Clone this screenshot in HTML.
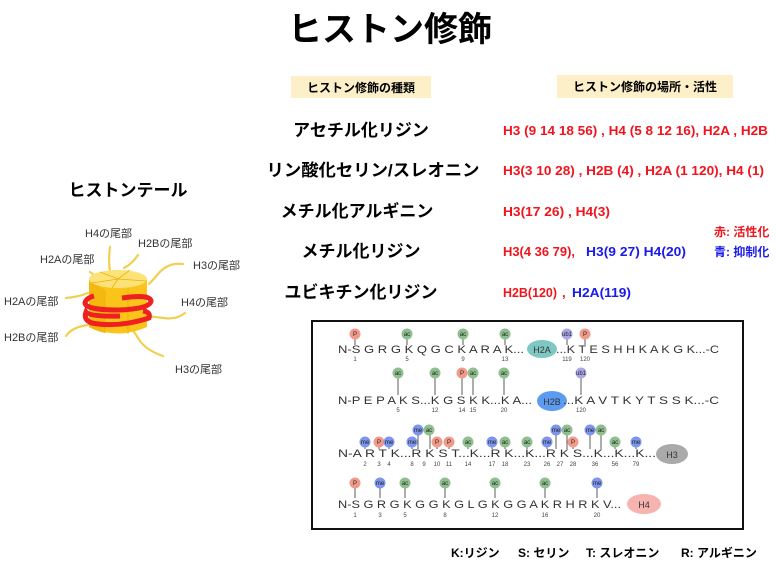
<!DOCTYPE html>
<html><head><meta charset="utf-8"><style>
html,body{margin:0;padding:0;background:#fff;width:777px;height:565px;overflow:hidden}
svg{display:block}
</style></head><body>
<svg width="777" height="565" viewBox="0 0 777 565" font-family="Liberation Sans, Noto Sans CJK JP, sans-serif">
<text x="390" y="41" font-size="34" font-weight="bold" text-anchor="middle" textLength="204" lengthAdjust="spacingAndGlyphs">ヒストン修飾</text>
<rect x="291" y="76" width="140" height="22" fill="#fdefc8"/>
<text x="361" y="92" font-size="12" font-weight="bold" text-anchor="middle">ヒストン修飾の種類</text>
<rect x="557" y="75" width="176" height="23" fill="#fdefc8"/>
<text x="645" y="91" font-size="12" font-weight="bold" text-anchor="middle">ヒストン修飾の場所・活性</text>
<g font-size="17" font-weight="bold" text-anchor="middle">
<text x="361" y="136">アセチル化リジン</text>
<text x="373" y="176" textLength="213" lengthAdjust="spacingAndGlyphs">リン酸化セリン/スレオニン</text>
<text x="357" y="217">メチル化アルギニン</text>
<text x="361" y="257">メチル化リジン</text>
<text x="361" y="298">ユビキチン化リジン</text>
</g>
<g font-size="13" font-weight="bold" fill="#f0141e">
<text x="503" y="135" textLength="265" lengthAdjust="spacingAndGlyphs">H3 (9 14 18 56) , H4 (5 8 12 16), H2A , H2B</text>
<text x="503" y="175" textLength="261" lengthAdjust="spacingAndGlyphs">H3(3 10 28) , H2B (4) , H2A (1 120), H4 (1)</text>
<text x="503" y="216" textLength="107" lengthAdjust="spacingAndGlyphs">H3(17 26) , H4(3)</text>
<text x="503" y="256" textLength="72" lengthAdjust="spacingAndGlyphs">H3(4 36 79),</text>
<text x="586" y="256" fill="#1a1aee" textLength="100" lengthAdjust="spacingAndGlyphs">H3(9 27) H4(20)</text>
<text x="503" y="297" textLength="54" lengthAdjust="spacingAndGlyphs">H2B(120)</text>
<text x="562" y="297">,</text>
<text x="572" y="297" fill="#1a1aee" textLength="59" lengthAdjust="spacingAndGlyphs">H2A(119)</text>
<text x="714" y="236" font-size="12">赤: 活性化</text>
<text x="714" y="256" font-size="12" fill="#1a1aee">青: 抑制化</text>
</g>
<text x="128" y="196" font-size="17" font-weight="bold" text-anchor="middle">ヒストンテール</text>
<g fill="none" stroke="#f0d050" stroke-width="2.2" stroke-linecap="round">
<path d="M110 247 Q107 268 114 288 Q119 300 116 306"/>
<path d="M138 255 Q132 264 124 268"/>
<path d="M90 272 Q96 276 98 280"/>
<path d="M183 264 Q168 262 158 274 Q153 280 149 284"/>
<path d="M66 298 Q78 297 88 293"/>
<path d="M185 313 Q176 320 164 318 Q154 317 149 316"/>
<path d="M66 336 Q72 327 88 325"/>
<path d="M163 356 Q145 350 138 338 Q133 330 128 323"/>
</g>
<path d="M89 280 L89 327 Q118 340 147 327 L147 280 Z" fill="#fbc41a"/>
<path d="M89 280 L89 327 Q96 331 105 333 L105 290 Z" fill="#f5b810"/>
<ellipse cx="118" cy="279" rx="29" ry="9" fill="#fde27a"/>
<g stroke="#e8b400" stroke-width="0.8" fill="none">
<path d="M118 279 L100 272 M118 279 L130 270 M118 279 L146 281 M118 279 L112 288 M118 279 L92 283"/>
<path d="M105 290 L105 333 M128 288 L128 334"/>
</g>
<path d="M122 298 Q150 294 151 301 Q150 309 118 310 Q86 310 85 303 Q86 298 94 296" fill="none" stroke="#ee2020" stroke-width="5"/>
<path d="M120 316 Q90 317 86 312 Q83 320 92 323 Q118 328 149 318 Q151 312 143 311" fill="none" stroke="#ee2020" stroke-width="5"/>
<g font-size="11" fill="#333">
<text x="85" y="237">H4の尾部</text>
<text x="138" y="247">H2Bの尾部</text>
<text x="40" y="263">H2Aの尾部</text>
<text x="193" y="269">H3の尾部</text>
<text x="4" y="305">H2Aの尾部</text>
<text x="181" y="306">H4の尾部</text>
<text x="4" y="341">H2Bの尾部</text>
<text x="175" y="373">H3の尾部</text>
</g>
<rect x="312" y="321" width="431" height="208" fill="#fff" stroke="#111" stroke-width="2"/>
<g font-size="11" fill="#333">
<text x="338" y="353" textLength="186" lengthAdjust="spacingAndGlyphs">N-S G R G K Q G C K A R A K...</text>
<ellipse cx="542" cy="349" rx="15" ry="9" fill="#7fc7c3"/>
<text x="542" y="353" font-size="9" text-anchor="middle">H2A</text>
<text x="556" y="353" textLength="163" lengthAdjust="spacingAndGlyphs">...K T E S H H K A K G K...-C</text>
<text x="338" y="404" textLength="194" lengthAdjust="spacingAndGlyphs">N-P E P A K S...K G S K K...K A...</text>
<ellipse cx="552" cy="401" rx="15" ry="10" fill="#5b9cf0"/>
<text x="552" y="405" font-size="9" text-anchor="middle">H2B</text>
<text x="563" y="404" textLength="156" lengthAdjust="spacingAndGlyphs">...K A V T K Y T S S K...-C</text>
<text x="338" y="457" textLength="318" lengthAdjust="spacingAndGlyphs">N-A R T K...R K S T...K...R K...K...R K S...K...K...K...</text>
<ellipse cx="672" cy="454" rx="16" ry="10" fill="#aaaaaa"/>
<text x="672" y="458" font-size="9" text-anchor="middle">H3</text>
<text x="338" y="508" textLength="283" lengthAdjust="spacingAndGlyphs">N-S G R G K G G K G L G K G G A K R H R K V...</text>
<ellipse cx="644" cy="504" rx="17" ry="10" fill="#f7b3b0"/>
<text x="644" y="508" font-size="9" text-anchor="middle">H4</text>
</g>
<g font-size="6" fill="#444" text-anchor="middle">
<text x="355" y="361">1</text><text x="407" y="361">5</text><text x="463" y="361">9</text><text x="505" y="361">13</text><text x="567" y="361">119</text><text x="585" y="361">120</text>
<text x="398" y="412">5</text><text x="435" y="412">12</text><text x="462" y="412">14</text><text x="473" y="412">15</text><text x="504" y="412">20</text><text x="581" y="412">120</text>
<text x="365" y="466">2</text><text x="379" y="466">3</text><text x="389" y="466">4</text><text x="412" y="466">8</text><text x="424" y="466">9</text><text x="437" y="466">10</text><text x="449" y="466">11</text><text x="468" y="466">14</text><text x="492" y="466">17</text><text x="505" y="466">18</text><text x="527" y="466">23</text><text x="547" y="466">26</text><text x="560" y="466">27</text><text x="573" y="466">28</text><text x="595" y="466">36</text><text x="615" y="466">56</text><text x="636" y="466">79</text>
<text x="355" y="517">1</text><text x="380" y="517">3</text><text x="405" y="517">5</text><text x="445" y="517">8</text><text x="495" y="517">12</text><text x="545" y="517">16</text><text x="597" y="517">20</text>
</g>
<g stroke="#333" stroke-width="0.8">
<path d="M355 339V345M407 339V345M463 339V345M505 339V345M567 339V345M585 339V345"/>
<path d="M398 378V395M435 378V395M462 378V395M473 378V395M504 378V395M581 378V395"/>
<path d="M365 447V449M379 447V449M389 447V449M412 447V449M437 447V449M449 447V449M468 447V449M492 447V449M505 447V449M527 447V449M547 447V449M573 447V449M615 447V449M636 447V449"/>
<path d="M418 434V449M430 434V449M556 434V449M567 434V449M590 434V449M601 434V449"/>
<path d="M355 488V498M380 488V498M405 488V498M445 488V498M495 488V498M545 488V498M597 488V498"/>
</g>
<g font-size="6" text-anchor="middle" fill="#222">
<circle cx="355" cy="334" r="5.5" fill="#f29a8a"/><text x="355" y="336">P</text>
<circle cx="407" cy="334" r="5.5" fill="#8fbf8f"/><text x="407" y="336">ac</text>
<circle cx="463" cy="334" r="5.5" fill="#8fbf8f"/><text x="463" y="336">ac</text>
<circle cx="505" cy="334" r="5.5" fill="#8fbf8f"/><text x="505" y="336">ac</text>
<circle cx="567" cy="334" r="5.5" fill="#a9a7e6"/><text x="567" y="336">ub1</text>
<circle cx="585" cy="334" r="5.5" fill="#f29a8a"/><text x="585" y="336">P</text>
<circle cx="398" cy="373" r="5.5" fill="#8fbf8f"/><text x="398" y="375">ac</text>
<circle cx="435" cy="373" r="5.5" fill="#8fbf8f"/><text x="435" y="375">ac</text>
<circle cx="462" cy="373" r="5.5" fill="#f29a8a"/><text x="462" y="375">P</text>
<circle cx="473" cy="373" r="5.5" fill="#8fbf8f"/><text x="473" y="375">ac</text>
<circle cx="504" cy="373" r="5.5" fill="#8fbf8f"/><text x="504" y="375">ac</text>
<circle cx="581" cy="373" r="5.5" fill="#a9a7e6"/><text x="581" y="375">ub1</text>
<circle cx="365" cy="442" r="5.5" fill="#7d95ee"/><text x="365" y="444">me</text>
<circle cx="379" cy="442" r="5.5" fill="#f29a8a"/><text x="379" y="444">P</text>
<circle cx="389" cy="442" r="5.5" fill="#7d95ee"/><text x="389" y="444">me</text>
<circle cx="412" cy="442" r="5.5" fill="#7d95ee"/><text x="412" y="444">me</text>
<circle cx="437" cy="442" r="5.5" fill="#f29a8a"/><text x="437" y="444">P</text>
<circle cx="449" cy="442" r="5.5" fill="#f29a8a"/><text x="449" y="444">P</text>
<circle cx="468" cy="442" r="5.5" fill="#8fbf8f"/><text x="468" y="444">ac</text>
<circle cx="492" cy="442" r="5.5" fill="#7d95ee"/><text x="492" y="444">me</text>
<circle cx="505" cy="442" r="5.5" fill="#8fbf8f"/><text x="505" y="444">ac</text>
<circle cx="527" cy="442" r="5.5" fill="#8fbf8f"/><text x="527" y="444">ac</text>
<circle cx="547" cy="442" r="5.5" fill="#7d95ee"/><text x="547" y="444">me</text>
<circle cx="573" cy="442" r="5.5" fill="#f29a8a"/><text x="573" y="444">P</text>
<circle cx="615" cy="442" r="5.5" fill="#8fbf8f"/><text x="615" y="444">ac</text>
<circle cx="636" cy="442" r="5.5" fill="#7d95ee"/><text x="636" y="444">me</text>
<circle cx="418" cy="430" r="5.5" fill="#7d95ee"/><text x="418" y="432">me</text>
<circle cx="429" cy="430" r="5.5" fill="#8fbf8f"/><text x="429" y="432">ac</text>
<circle cx="556" cy="430" r="5.5" fill="#7d95ee"/><text x="556" y="432">me</text>
<circle cx="567" cy="430" r="5.5" fill="#8fbf8f"/><text x="567" y="432">ac</text>
<circle cx="590" cy="430" r="5.5" fill="#7d95ee"/><text x="590" y="432">me</text>
<circle cx="601" cy="430" r="5.5" fill="#8fbf8f"/><text x="601" y="432">ac</text>
<circle cx="355" cy="483" r="5.5" fill="#f29a8a"/><text x="355" y="485">P</text>
<circle cx="380" cy="483" r="5.5" fill="#7d95ee"/><text x="380" y="485">me</text>
<circle cx="405" cy="483" r="5.5" fill="#8fbf8f"/><text x="405" y="485">ac</text>
<circle cx="445" cy="483" r="5.5" fill="#8fbf8f"/><text x="445" y="485">ac</text>
<circle cx="495" cy="483" r="5.5" fill="#8fbf8f"/><text x="495" y="485">ac</text>
<circle cx="545" cy="483" r="5.5" fill="#8fbf8f"/><text x="545" y="485">ac</text>
<circle cx="597" cy="483" r="5.5" fill="#7d95ee"/><text x="597" y="485">me</text>
</g>
<g font-size="12" font-weight="bold">
<text x="451" y="557">K:リジン</text>
<text x="518" y="557">S: セリン</text>
<text x="586" y="557">T: スレオニン</text>
<text x="681" y="557">R: アルギニン</text>
</g>
</svg>
</body></html>
